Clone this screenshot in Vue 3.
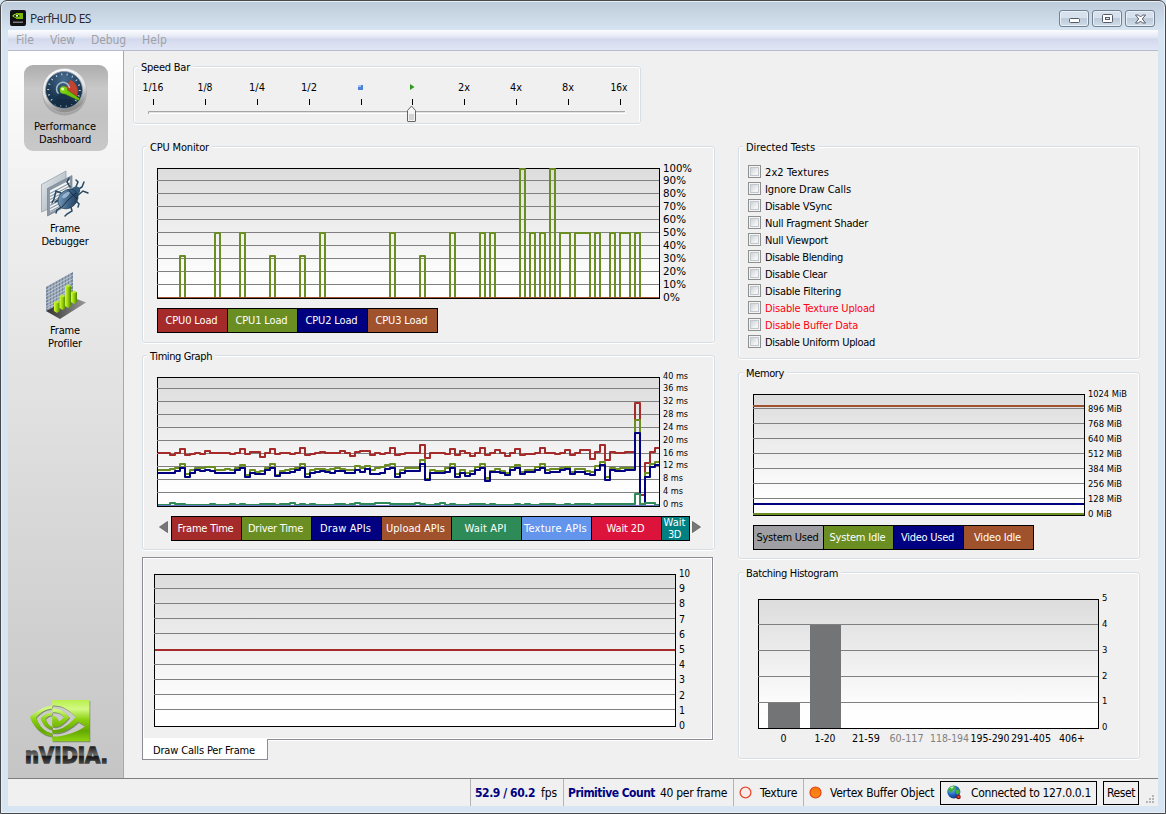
<script setup>
import { h } from 'vue'

// Spreads a label's letters so that it takes exactly the given width in pixels.
const vFit = {
  mounted(el, binding) {
    const n = el.textContent.length
    const w = el.getBoundingClientRect().width
    if (n > 0) el.style.letterSpacing = `${(binding.value - w) / n}px`
  },
}

const menus = [
  { t: 'File', w: 18 },
  { t: 'View', w: 25 },
  { t: 'Debug', w: 35 },
  { t: 'Help', w: 25 },
]

const speeds = [
  { t: '1/16', x: 153, w: 21 },
  { t: '1/8', x: 205, w: 15 },
  { t: '1/4', x: 257, w: 16 },
  { t: '1/2', x: 309, w: 16 },
  { t: '', x: 361 },
  { t: '', x: 412 },
  { t: '2x', x: 464, w: 12 },
  { t: '4x', x: 516, w: 12 },
  { t: '8x', x: 568, w: 12 },
  { t: '16x', x: 619, w: 17 },
]

const tests = [
  { t: '2x2 Textures', w: 64 },
  { t: 'Ignore Draw Calls', w: 86 },
  { t: 'Disable VSync', w: 67 },
  { t: 'Null Fragment Shader', w: 103 },
  { t: 'Null Viewport', w: 63 },
  { t: 'Disable Blending', w: 78 },
  { t: 'Disable Clear', w: 62 },
  { t: 'Disable Filtering', w: 76 },
  { t: 'Disable Texture Upload', w: 110, red: true },
  { t: 'Disable Buffer Data', w: 93, red: true },
  { t: 'Disable Uniform Upload', w: 110 },
]

const cpuKeys = [
  { t: 'CPU0 Load', w: 52, c: 'brown' },
  { t: 'CPU1 Load', w: 52, c: 'olive' },
  { t: 'CPU2 Load', w: 52, c: 'navy' },
  { t: 'CPU3 Load', w: 52, c: 'sienna' },
]
const timingKeys = [
  { t: 'Frame Time', w: 56, c: 'brown' },
  { t: 'Driver Time', w: 55, c: 'olive' },
  { t: 'Draw APIs', w: 51, c: 'navy' },
  { t: 'Upload APIs', w: 59, c: 'sienna' },
  { t: 'Wait API', w: 42, c: 'sea' },
  { t: 'Texture APIs', w: 63, c: 'corn' },
  { t: 'Wait 2D', w: 38, c: 'crimson' },
]
const memoryKeys = [
  { t: 'System Used', w: 62, c: 'grey' },
  { t: 'System Idle', w: 56, c: 'olive' },
  { t: 'Video Used', w: 53, c: 'navy' },
  { t: 'Video Idle', w: 47, c: 'sienna' },
]

// CPU load bursts: [start, end, top]
const bursts = [
  [180, 185, 256], [215, 220, 233], [240, 245, 233], [270, 275, 256], [300, 305, 256],
  [320, 325, 233], [390, 395, 233], [420, 425, 256], [450, 455, 233], [480, 485, 233],
  [490, 495, 233], [520, 525, 169], [530, 535, 233], [540, 545, 233], [550, 555, 169],
  [560, 570, 233], [575, 590, 233], [595, 600, 233], [610, 615, 233], [620, 630, 233],
  [635, 640, 233],
]
const cpuPath = bursts.map(([a, b, y]) => `M${a} 297V${y}H${b}V297`).join('')

// Timing samples as "column:level" pairs in thirds of a pixel.
function steps(src) {
  const pts = src.split(' ').map((p) => p.split(':').map(Number))
  let d = ''
  pts.forEach(([x, y], i) => {
    const px = 140 + x / 3
    const py = 350 + y / 3
    d += i === 0 ? `M158 ${py}` : `H${px}V${py}`
  })
  return d + 'H659'
}
const redLine = steps('52:309 90:315 105:309 120:297 135:315 150:312 165:309 180:312 195:303 210:309 270:312 285:309 300:297 315:312 330:306 360:321 375:309 390:297 405:312 420:309 450:312 465:309 480:294 495:315 510:312 525:309 540:306 555:309 600:303 615:309 630:318 645:306 660:303 690:315 705:309 720:312 735:309 750:294 765:315 780:312 795:309 840:285 855:324 870:309 915:312 930:297 945:315 960:303 975:309 990:318 1005:309 1020:294 1035:315 1050:309 1065:300 1080:309 1095:318 1110:309 1125:297 1140:315 1155:312 1185:309 1200:294 1215:309 1245:312 1260:309 1275:300 1290:315 1305:309 1320:300 1350:327 1365:306 1380:285 1395:330 1410:306 1425:309 1455:306 1485:159 1500:435 1515:339 1530:306 1545:294')
const greenLine = steps('52:360 90:357 105:354 120:342 135:372 150:360 165:354 195:351 225:360 255:357 270:360 285:354 300:345 315:375 330:360 345:366 360:363 375:354 390:342 405:375 420:363 435:360 450:357 465:354 480:342 495:372 510:360 525:357 555:360 570:357 585:354 600:357 615:360 645:348 660:354 675:348 690:360 705:354 720:351 735:345 750:342 765:372 780:360 795:354 840:330 855:387 870:360 885:363 915:354 930:342 945:372 960:360 975:369 990:363 1005:351 1020:342 1035:384 1050:363 1065:357 1080:363 1095:369 1110:351 1125:345 1140:366 1155:360 1185:351 1200:342 1215:360 1230:357 1260:354 1275:351 1290:366 1305:357 1335:363 1350:366 1365:348 1380:336 1395:381 1410:354 1425:357 1440:354 1485:210 1500:462 1515:369 1530:342 1545:336')
const blueLine = steps('52:369 105:363 120:354 135:381 150:369 165:360 180:363 195:360 210:363 225:369 285:360 300:354 315:381 330:369 345:372 375:360 390:354 405:378 420:369 450:366 465:360 480:354 495:381 510:369 525:366 540:363 555:366 570:369 585:363 615:369 645:360 660:366 675:357 690:372 720:369 735:357 750:354 765:381 780:369 795:363 840:342 855:390 870:369 915:366 930:354 945:381 960:369 975:378 990:372 1005:360 1020:354 1035:393 1050:366 1080:369 1095:375 1110:360 1125:354 1140:372 1155:366 1185:360 1200:354 1215:369 1230:366 1260:360 1275:357 1290:372 1305:366 1335:372 1350:375 1365:360 1380:345 1395:390 1410:360 1425:363 1455:360 1485:249 1500:465 1515:381 1530:351 1545:345')
const tealLine = steps('52:465 90:459 105:462 135:465 210:462 225:465 270:462 285:465 300:462 315:465 360:462 405:465 420:462 450:459 465:465 480:462 495:465 510:462 525:465 585:462 615:465 630:462 645:459 660:462 705:459 750:462 825:459 840:462 855:465 885:462 900:459 915:465 930:462 945:465 990:462 1035:465 1050:462 1065:465 1125:462 1140:465 1155:462 1170:465 1200:462 1245:465 1275:462 1290:465 1305:462 1350:465 1365:462 1485:432 1500:465 1515:459 1545:465')

const FONT = "'DejaVu Sans Condensed', 'DejaVu Sans', 'Liberation Sans', sans-serif"
function label(t, x, y, w, size, fill = '#000', anchor = 'start') {
  return h('text', {
    x, y, fill, 'text-anchor': anchor, 'font-size': size, 'font-family': FONT,
    'font-stretch': 'condensed', textLength: w, lengthAdjust: 'spacingAndGlyphs',
  }, t)
}

// A plot frame with a shaded background, rules and a value axis on its right.
function Chart(props, { slots }) {
  const { id, view, box, grid, ticks, bins = [], size = 11 } = props
  const [x0, y0, x1, y1] = box
  return h('svg', { viewBox: view.join(' '), width: view[2], height: view[3], class: 'chart' }, [
    h('defs', [
      h('linearGradient', { id, x1: 0, y1: 0, x2: 0, y2: 1 }, [
        h('stop', { offset: 0, 'stop-color': '#dcdcdc' }),
        h('stop', { offset: 0.82, 'stop-color': '#fdfdfd' }),
        h('stop', { offset: 1, 'stop-color': '#fff' }),
      ]),
    ]),
    h('rect', { x: x0 + 0.5, y: y0 + 0.5, width: x1 - x0, height: y1 - y0, fill: `url(#${id})`, stroke: '#000' }),
    ...grid.map((y) => h('rect', { x: x0, y, width: x1 - x0, height: 1, fill: '#808080' })),
    slots.default ? slots.default() : null,
    ...ticks.map(([t, x, y, w]) => label(t, x, y, w, size)),
    ...bins.map(([t, x, y, w, f]) => label(t, x, y, w, 11, f, 'middle')),
  ])
}
Chart.props = ['id', 'view', 'box', 'grid', 'ticks', 'bins', 'size']

const range = (n, f) => Array.from({ length: n }, (_, i) => f(i))
const cpuGrid = range(9, (i) => 180 + 13 * i)
const cpuTicks = range(11, (i) => {
  const v = 100 - i * 10
  return [`${v}%`, 663, i === 0 ? 172 : Math.round(171.3 + i * 12.95), v === 100 ? 29 : v === 0 ? 17 : 23]
})
const timeGrid = range(9, (i) => 388 + 13 * i)
const timeTicks = range(11, (i) => {
  const v = 40 - i * 4
  return [`${v} ms`, 663, i === 0 ? 379 : Math.round(378.3 + i * 12.87), v >= 10 ? 25 : 20]
})
const memGrid = range(7, (i) => 408 + 15 * i)
const memTicks = range(9, (i) => {
  const v = 1024 - i * 128
  return [`${v} MiB`, 1088, Math.round(396.6 + i * 15.05), v > 999 ? 39 : v === 0 ? 24 : 34]
})
const histTicks = range(6, (i) => [`${5 - i}`, 1102, Math.round(601.4 + i * 25.7), 5.4])
const histBins = [
  ['0', 783.5, 742, 6], ['1-20', 825, 742, 21], ['21-59', 866, 742, 28],
  ['60-117', 906.5, 742, 34, '#808080'], ['118-194', 949.5, 742, 39, '#808080'],
  ['195-290', 990, 742, 39], ['291-405', 1031, 742, 40], ['406+', 1072, 742, 26],
]
const drawGrid = [588, 603, 618, 633, 664, 679, 694, 709]
const drawTicks = range(11, (i) => [`${10 - i}`, 679, Math.round(577 + i * 15.2), i === 0 ? 11 : 6])
const profBars = [
  [54, 302, 311], [59.5, 296, 308], [65, 286, 306], [71, 292, 302],
]
</script>

<template>
  <div class="window">
    <header class="titlebar">
      <svg class="appicon" width="16" height="16" viewBox="0 0 16 16">
        <rect width="16" height="16" rx="2" fill="#111" />
        <rect x="6" y="3" width="7" height="6" fill="#76b900" />
        <path d="M2 6Q6 1.500 11 5.500Q7 10 2 6Z" fill="#8fce1c" />
        <path d="M4 6Q7 3.500 9.500 6Q7 8 4 6" fill="none" stroke="#163800" />
        <circle cx="7" cy="5.800" r="1" fill="#fff" />
        <rect x="3" y="11.500" width="10" height="1.500" fill="#a5a5a5" opacity=".7" />
      </svg>
      <span v-fit="61" class="title">PerfHUD ES</span>
      <div class="winbtns">
        <span class="winbtn"><svg width="13" height="10" viewBox="0 0 13 10"><rect x="1.500" y="4.500" width="10" height="4" rx="1" fill="#fff" stroke="#555b66" /></svg></span>
        <span class="winbtn"><svg width="13" height="10" viewBox="0 0 13 10"><rect x="1.500" y=".5" width="10" height="8" rx="1" fill="#fff" stroke="#555b66" /><rect x="4.500" y="3.500" width="4" height="2" fill="#dce6f1" stroke="#555b66" /></svg></span>
        <span class="winbtn"><svg width="13" height="10" viewBox="0 0 13 10"><path d="M1.500 1H4.500L6.500 3L8.500 1H11.500L8.300 5L11.500 9H8.500L6.500 7L4.500 9H1.500L4.700 5Z" fill="#fff" stroke="#555b66" /></svg></span>
      </div>
    </header>

    <nav class="menubar">
      <span v-for="m in menus" :key="m.t" class="menu"><span v-fit="m.w">{{ m.t }}</span></span>
    </nav>

    <div class="body">
      <aside class="sidebar">
        <div class="tool selected">
          <svg width="50" height="50" viewBox="39 66 50 50">
            <defs>
              <linearGradient id="rim" x1="0" y1="0" x2="0.300" y2="1"><stop offset="0" stop-color="#fff" /><stop offset=".6" stop-color="#e2e2e2" /><stop offset="1" stop-color="#8e8e8e" /></linearGradient>
              <radialGradient id="dial" cx=".5" cy=".2" r=".9"><stop offset="0" stop-color="#46698c" /><stop offset=".6" stop-color="#1c3852" /><stop offset="1" stop-color="#0f2436" /></radialGradient>
            </defs>
            <ellipse cx="64.500" cy="94" rx="22" ry="21.500" fill="#777" opacity=".4" />
            <circle cx="64.500" cy="90.500" r="22.200" fill="url(#rim)" stroke="#b5b5b5" stroke-width=".7" />
            <circle cx="64" cy="90" r="18.500" fill="url(#dial)" stroke="#8796a3" stroke-width=".8" />
            <path d="M64 90L70.500 80A12.500 12.500 0 0 1 76 98Z" fill="#c2432f" />
            <circle cx="64" cy="90" r="15.800" fill="none" stroke="#c4d4e1" stroke-width="2" stroke-dasharray="1 4.410" pathLength="97.400" />
            <path d="M53 99A14 14 0 0 0 75 99L64 92Z" fill="#17334d" />
            <path d="M53 103Q64 109 75 103L70 99H58Z" fill="#142d44" />
            <path d="M58.500 93.500A6.500 6.500 0 1 1 69.500 88" fill="none" stroke="#a7bccd" stroke-width="1.500" />
            <path d="M64 87.500L79.500 98.500L78.500 100.500L62.500 93Z" fill="#6ec40c" stroke="#2c6500" stroke-width=".5" />
            <circle cx="63.500" cy="90" r="3.700" fill="#7cd010" /><circle cx="62.600" cy="89" r="1.600" fill="#e4ffac" />
          </svg>
          <span v-fit="62" class="cap">Performance</span>
          <span v-fit="52" class="cap">Dashboard</span>
        </div>

        <div class="tool">
          <svg width="50" height="50" viewBox="39 168 50 50">
            <defs><linearGradient id="bug" x1="0" y1="0" x2="1" y2="1"><stop offset="0" stop-color="#8db1cf" /><stop offset=".5" stop-color="#41678b" /><stop offset="1" stop-color="#142f4b" /></linearGradient>
              <linearGradient id="page" x1="0" y1="0" x2="1" y2="1"><stop offset="0" stop-color="#e6ebef" /><stop offset="1" stop-color="#9eabb6" /></linearGradient></defs>
            <path d="M41.500 184.500L66 171V201L41.500 212Z" fill="url(#page)" stroke="#8c99a4" stroke-width=".7" />
            <path d="M47.500 188.500L72 175.500V203L47.500 216Z" fill="#8c98a4" stroke="#71808e" stroke-width=".7" />
            <path d="M50 190.500L70 180V202L50 212.500Z" fill="#f3f6f8" />
            <path d="M50 193.500L70 183M50 196.500L70 186M50 199.500L70 189M50 202.500L70 192M50 205.500L70 195M50 208.500L70 198M50 211.500L70 201" stroke="#8d9aa6" stroke-width="1.100" />
            <path d="M61 193L56 191L54 199L52 203M60 199L55 202M63 206L57 210L56 213M71 207L72 211L67 214L65 216M75 200L79 204L78 207M77 196L83 191L88 193M75 189L78 182L76 180M70 187L67 182L69 178M77 190L82 187L84 182" fill="none" stroke="#284861" stroke-width="1.500" stroke-linecap="round" />
            <ellipse cx="75.500" cy="191" rx="5" ry="4.300" fill="#355b7c" transform="rotate(-40 75.500 191)" />
            <ellipse cx="68" cy="199" rx="11" ry="8.800" transform="rotate(-42 68 199)" fill="url(#bug)" stroke="#1e3a54" stroke-width=".7" />
            <path d="M76 193Q67 200 62 207M68 189.500L77 199" fill="none" stroke="#14293e" stroke-width=".9" />
            <ellipse cx="66" cy="195" rx="4.500" ry="1.800" transform="rotate(-40 66 195)" fill="#b4cfe5" opacity=".7" />
          </svg>
          <span v-fit="30" class="cap">Frame</span>
          <span v-fit="47" class="cap">Debugger</span>
        </div>

        <div class="tool">
          <svg width="50" height="50" viewBox="39 270 50 50">
            <defs><linearGradient id="bar" x1="0" y1="0" x2="1" y2="0"><stop offset="0" stop-color="#dcfa45" /><stop offset=".45" stop-color="#9bd60a" /><stop offset="1" stop-color="#4e8600" /></linearGradient>
              <linearGradient id="floor" x1="0" y1="0" x2="1" y2="0"><stop offset="0" stop-color="#333" /><stop offset="1" stop-color="#999" /></linearGradient></defs>
            <path d="M46 287L73 272V301L46 311Z" fill="#76869a" />
            <path d="M49 285.300V310M52 283.700V309M55 282V308M58 280.300V307M61 278.700V306M64 277V305M67 275.300V304M70 273.700V303M46 290L73 275M46 293.300L73 278.500M46 296.600L73 282M46 300L73 285.500M46 303.300L73 289M46 306.600L73 292.500M46 309L73 296" stroke="#d5dde6" stroke-width=".7" />
            <path d="M46 311L73 297.500L86 302.500L60 319Z" fill="url(#floor)" />
            <g v-for="b in profBars" :key="b[0]">
              <path :d="`M${b[0]} ${b[1]}V${b[2]}L${b[0] + 3} ${b[2] + 2}L${b[0] + 6} ${b[2]}V${b[1]}Z`" fill="url(#bar)" />
              <path :d="`M${b[0]} ${b[1]}L${b[0] + 3} ${b[1] - 1.5}L${b[0] + 6} ${b[1]}L${b[0] + 3} ${b[1] + 1.5}Z`" fill="#b8e83a" />
            </g>
          </svg>
          <span v-fit="30" class="cap">Frame</span>
          <span v-fit="34" class="cap">Profiler</span>
        </div>

        <svg class="brand" width="92" height="76" viewBox="20 695 92 76">
          <defs>
            <linearGradient id="nv" x1="0" y1="0" x2="0" y2="1"><stop offset="0" stop-color="#b9ef4c" /><stop offset=".22" stop-color="#d3fa85" /><stop offset=".48" stop-color="#8bd00e" /><stop offset=".75" stop-color="#64a800" /><stop offset="1" stop-color="#8ed411" /></linearGradient>
            <linearGradient id="nvt" x1="0" y1="747" x2="0" y2="763" gradientUnits="userSpaceOnUse"><stop offset="0" stop-color="#222" /><stop offset=".5" stop-color="#6d6d6d" /><stop offset=".6" stop-color="#161616" /><stop offset="1" stop-color="#444" /></linearGradient>
          </defs>
          <g transform="translate(30 689.400) scale(2.480 2.600)">
            <path transform="translate(.3 .4)" fill="#3d5a17" opacity=".55" d="M8.948 8.798v-1.430a6.700 6.700 0 0 1 .424-.018c3.922-.124 6.493 3.374 6.493 3.374s-2.774 3.851-5.750 3.851c-.398 0-.787-.062-1.158-.185v-4.346c1.528.185 1.837.857 2.747 2.385l2.040-1.714s-1.492-1.952-4-1.952a6.016 6.016 0 0 0-.796.035m0-4.735v2.138l.424-.027c5.450-.185 9.010 4.470 9.010 4.470s-4.080 4.964-8.330 4.964c-.370 0-.733-.035-1.095-.097v1.325c.3.035.610.062.910.062 3.957 0 6.820-2.023 9.593-4.408.459.371 2.340 1.263 2.730 1.652-2.633 2.208-8.772 3.984-12.253 3.984-.335 0-.653-.018-.971-.053v1.864H24V4.063zm0 10.326v1.131c-3.657-.654-4.673-4.460-4.673-4.460s1.758-1.944 4.673-2.262v1.237H8.940c-1.528-.186-2.730 1.245-2.730 1.245s.680 2.412 2.739 3.110M2.456 10.900s2.164-3.197 6.500-3.533V6.201C4.153 6.590 0 10.653 0 10.653s2.350 6.802 8.948 7.420v-1.237c-4.840-.6-6.492-5.936-6.492-5.936z" />
            <path fill="url(#nv)" d="M8.948 8.798v-1.430a6.700 6.700 0 0 1 .424-.018c3.922-.124 6.493 3.374 6.493 3.374s-2.774 3.851-5.750 3.851c-.398 0-.787-.062-1.158-.185v-4.346c1.528.185 1.837.857 2.747 2.385l2.040-1.714s-1.492-1.952-4-1.952a6.016 6.016 0 0 0-.796.035m0-4.735v2.138l.424-.027c5.450-.185 9.010 4.470 9.010 4.470s-4.080 4.964-8.330 4.964c-.370 0-.733-.035-1.095-.097v1.325c.3.035.610.062.910.062 3.957 0 6.820-2.023 9.593-4.408.459.371 2.340 1.263 2.730 1.652-2.633 2.208-8.772 3.984-12.253 3.984-.335 0-.653-.018-.971-.053v1.864H24V4.063zm0 10.326v1.131c-3.657-.654-4.673-4.460-4.673-4.460s1.758-1.944 4.673-2.262v1.237H8.940c-1.528-.186-2.730 1.245-2.730 1.245s.680 2.412 2.739 3.110M2.456 10.900s2.164-3.197 6.500-3.533V6.201C4.153 6.590 0 10.653 0 10.653s2.350 6.802 8.948 7.420v-1.237c-4.840-.6-6.492-5.936-6.492-5.936z" />
          </g>
          <text class="brandtext" x="25" y="762.500" textLength="83" lengthAdjust="spacingAndGlyphs" fill="url(#nvt)" stroke="url(#nvt)">nVIDIA.</text>
        </svg>
      </aside>

      <main class="main">
        <section class="group speed">
          <h2 class="legend"><span v-fit="49">Speed Bar</span></h2>
          <svg width="490" height="48" viewBox="142 75 490 48">
            <text v-for="s in speeds.filter((v) => v.t)" :key="s.t" class="small" :x="s.x" y="91" text-anchor="middle" :textLength="s.w" lengthAdjust="spacingAndGlyphs">{{ s.t }}</text>
            <rect v-for="s in speeds" :key="s.x" :x="s.x === 619 ? 620 : s.x" y="99" width="1" height="6" />
            <rect x="358" y="85" width="5" height="5" fill="#4e80d8" /><rect x="358" y="85" width="3" height="2" fill="#a5c4f5" />
            <path d="M410 84L414.500 87L410 90Z" fill="#2d9a1c" />
            <path d="M148.500 114V111.500H625.500" fill="none" stroke="#a5a5a5" />
            <path d="M149 113.500H625.500V111" fill="none" stroke="#fff" />
            <path d="M149 112.500H625" stroke="#e3e3e3" />
            <path d="M407.500 110.500L411.500 106L415.500 110.500V121Q415.500 121.500 415 121.500H408Q407.500 121.500 407.500 121Z" fill="#f4f4f4" stroke="#646464" />
            <rect x="409" y="114" width="5" height="6" fill="#d3d3d3" />
          </svg>
        </section>

        <div class="columns">
          <div class="left">
            <section class="group cpu">
              <h2 class="legend"><span v-fit="59">CPU Monitor</span></h2>
              <Chart id="g1" :view="[157, 160, 545, 142]" :box="[157, 168, 659, 298]" :grid="cpuGrid" :ticks="cpuTicks">
                <path d="M158 297.500H659" stroke="#a0522d" />
                <path :d="cpuPath" fill="none" stroke="#6b8e23" stroke-width="2" stroke-linejoin="round" />
              </Chart>
              <div class="keys">
                <span v-for="k in cpuKeys" :key="k.t" class="key" :class="k.c"><span v-fit="k.w">{{ k.t }}</span></span>
              </div>
            </section>

            <section class="group timing">
              <h2 class="legend"><span v-fit="62">Timing Graph</span></h2>
              <Chart id="g2" :view="[157, 368, 545, 143]" :box="[157, 377, 659, 506]" :grid="timeGrid" :ticks="timeTicks" :size="9.5">
                <g fill="none" stroke-width="2" stroke-linejoin="round">
                  <path :d="redLine" stroke="#a52a2a" />
                  <path :d="greenLine" stroke="#6b8e23" />
                  <path :d="blueLine" stroke="#000080" />
                  <path :d="tealLine" stroke="#2e8b57" />
                </g>
                <path d="M158 505.500H659" stroke="#6a78c4" />
              </Chart>
              <div class="keyrow">
                <svg width="9" height="12" viewBox="0 0 9 12"><path d="M8.500 .5V11.500L.5 6Z" fill="#777" stroke="#555" stroke-width=".7" /></svg>
                <div class="keys">
                  <span v-for="k in timingKeys" :key="k.t" class="key" :class="k.c"><span v-fit="k.w">{{ k.t }}</span></span>
                  <span class="key teal narrow"><span v-fit="22">Wait</span><span v-fit="13">3D</span></span>
                </div>
                <svg width="9" height="12" viewBox="0 0 9 12"><path d="M.5 .5V11.500L8.500 6Z" fill="#777" stroke="#555" stroke-width=".7" /></svg>
              </div>
            </section>

            <section class="pane">
              <Chart id="g3" :view="[154, 566, 545, 166]" :box="[154, 574, 675, 726]" :grid="drawGrid" :ticks="drawTicks">
                <rect x="155" y="649" width="520" height="2" fill="#a52a2a" />
              </Chart>
            </section>
            <div class="tab"><span v-fit="102">Draw Calls Per Frame</span></div>
          </div>

          <div class="right">
            <section class="group tests">
              <h2 class="legend"><span v-fit="69">Directed Tests</span></h2>
              <div v-for="t in tests" :key="t.t" class="check" :class="{ red: t.red }">
                <i class="box"></i><span v-fit="t.w">{{ t.t }}</span>
              </div>
            </section>

            <section class="group memory">
              <h2 class="legend"><span v-fit="38">Memory</span></h2>
              <Chart id="g4" :view="[753, 386, 380, 134]" :box="[753, 394, 1084, 515]" :grid="memGrid" :ticks="memTicks" :size="9.5">
                <rect x="753" y="405" width="331" height="2" fill="#a0522d" />
                <rect x="753" y="503" width="331" height="2" fill="#000080" />
                <rect x="753" y="513" width="331" height="2" fill="#6b8e23" />
              </Chart>
              <div class="keys">
                <span v-for="k in memoryKeys" :key="k.t" class="key" :class="k.c"><span v-fit="k.w">{{ k.t }}</span></span>
              </div>
            </section>

            <section class="group hist">
              <h2 class="legend"><span v-fit="92">Batching Histogram</span></h2>
              <Chart id="g5" :view="[753, 590, 380, 160]" :box="[758, 599, 1098, 728]" :grid="[624, 650, 676, 702]" :ticks="histTicks" :bins="histBins" :size="9.5">
                <rect x="768" y="703" width="32" height="25" fill="#737476" />
                <rect x="810" y="625" width="31" height="103" fill="#737476" />
              </Chart>
            </section>
          </div>
        </div>
      </main>
    </div>

    <footer class="status">
      <div class="cell fps"><b v-fit="60">52.9 / 60.2</b><span v-fit="16">fps</span></div>
      <div class="cell prim"><b v-fit="87">Primitive Count</b><span v-fit="67">40 per frame</span></div>
      <div class="cell tex">
        <svg width="13" height="13" viewBox="0 0 13 13"><circle cx="6.500" cy="6.500" r="5.400" fill="#f7ecea" stroke="#e8492f" stroke-width="1.300" /></svg>
        <span v-fit="37">Texture</span>
      </div>
      <div class="cell vbo">
        <svg width="13" height="13" viewBox="0 0 13 13"><defs><linearGradient id="or" x1="0" y1="0" x2="0" y2="1"><stop offset="0" stop-color="#f5760e" /><stop offset="1" stop-color="#fb8a1b" /></linearGradient></defs><circle cx="6.500" cy="6.500" r="5.500" fill="url(#or)" stroke="#e8420e" stroke-width="1.200" /></svg>
        <span v-fit="104">Vertex Buffer Object</span>
      </div>
      <div class="boxed conn">
        <svg width="15" height="16" viewBox="0 0 15 16">
          <defs><radialGradient id="sea" cx=".35" cy=".3" r=".8"><stop offset="0" stop-color="#7ec8ff" /><stop offset=".5" stop-color="#2468c8" /><stop offset="1" stop-color="#0a2870" /></radialGradient></defs>
          <circle cx="6.800" cy="7" r="6.500" fill="url(#sea)" />
          <path d="M1 4Q4 0 8 1L9 4L6 5L5 8L2 7ZM9 5L12.500 4L13 8L10.500 10L9 8Z" fill="#3fae3c" />
          <path d="M3 2.500Q5 1 7 1.500L5 4Z" fill="#d4f7c4" />
          <circle cx="11.500" cy="12" r="2.300" fill="#7d1710" /><circle cx="11.500" cy="11.800" r="1.100" fill="#f0503c" />
        </svg>
        <span v-fit="120">Connected to 127.0.0.1</span>
      </div>
      <div class="boxed reset"><span v-fit="28">Reset</span></div>
      <svg class="grip" width="10" height="10" viewBox="0 0 10 10"><g fill="#b5b5b5"><rect x="6" y="0" width="2" height="2" /><rect x="6" y="3" width="2" height="2" /><rect x="6" y="6" width="2" height="2" /><rect x="3" y="3" width="2" height="2" /><rect x="3" y="6" width="2" height="2" /><rect x="0" y="6" width="2" height="2" /></g></svg>
    </footer>
  </div>
</template>

<style>
body { background: #d7e4f2; overflow: hidden; }
.chart { display: block; overflow: visible; }
</style>

<style scoped>
.window, .window * { box-sizing: border-box; }
.window {
  width: 1166px; height: 814px; padding: 0 7px 7px;
  border: 1px solid #48484a; border-radius: 7px 7px 0 0;
  background: linear-gradient(#bccad9 0, #d7e4f2 30px);
  box-shadow: inset 0 0 0 1px #e6eef7;
  font-family: 'DejaVu Sans Condensed', 'DejaVu Sans', 'Liberation Sans', sans-serif;
  font-stretch: condensed; font-size: 11px; line-height: 13px; color: #000;
  white-space: nowrap; overflow: hidden;
}
svg { display: block; flex: none; }
.titlebar { height: 29px; display: flex; align-items: flex-start; padding: 9px 3px 0 2px; }
.title { margin: 1px 0 0 4px; font: 12px/16px 'Open Sans', 'Noto Sans', sans-serif; color: #26262e; }
.winbtns { margin-left: auto; display: flex; gap: 3px; }
.winbtn {
  width: 30px; height: 17px; border: 1px solid #73808f; border-radius: 3px;
  background: linear-gradient(#d6e1ed 0 45%, #bccad9 50%, #cfdcea);
  box-shadow: inset 0 0 0 1px #e8f0f8;
  display: flex; align-items: center; justify-content: center;
}
.menubar {
  height: 21px; display: flex; gap: 16px; padding: 4px 8px 0; color: #a0a0a6; font-size: 12px;
  background: linear-gradient(#fbfcfe 0, #e4e8f4 35%, #d3d9ed 45%, #e1e6f5); border-bottom: 1px solid #b6bccc;
}
.body { display: flex; height: 728px; background: #f0f0f0; border-bottom: 1px solid #7f7f7f; }
.sidebar {
  width: 116px; padding: 14px 0 7px; border-right: 1px solid #a8a8a8;
  background: linear-gradient(#fff, #f0f0f0 20%, #c5c5c5);
  display: flex; flex-direction: column; align-items: center; gap: 16px;
}
.tool { width: 84px; height: 86px; padding-top: 1px; border-radius: 9px; display: flex; flex-direction: column; align-items: center; margin-left: 1px; }
.tool svg { margin: 0 4px 4px 0; }
.cap { margin-right: 2px; }
.tool.selected { background: linear-gradient(#adadad, #c9c9c9 28%, #c2c2c2 60%, #c9c9c9); }
.brand { margin-top: auto; overflow: visible; }
.brandtext { font: bold 20.5px 'DejaVu Sans', sans-serif; stroke-width: 1.3px; }

.main { padding: 15px 0 0 9px; }
.group {
  position: relative; border: 1px solid #d5dfe5; border-radius: 3px;
  box-shadow: inset 1px 1px 0 #fff, inset -1px 0 0 #fff, 0 1px 0 #fff;
}
.legend { position: absolute; top: -6px; left: 4px; margin: 0; padding: 0 3px; background: #f0f0f0; font-size: 11px; font-weight: normal; }
.speed { width: 508px; height: 58px; padding: 8px 0 0 8px; }
.small { font-size: 11px; }
.columns { display: flex; gap: 23px; margin: 22px 0 0 9px; }
.left { width: 573px; }
.cpu { height: 197px; padding: 13px 0 0 14px; }
.keys { display: flex; }
.cpu .keys { margin-top: 6px; }
.key {
  width: 71px; height: 25px; margin-right: -1px; padding: 0 2px 1px 0; border: 1px solid #000; color: #fff;
  display: flex; align-items: center; justify-content: center;
}
.narrow { width: 29px; flex-direction: column; line-height: 12px; padding-bottom: 0; }
.brown { background: #a52a2a; }
.olive { background: #6b8e23; }
.navy { background: #000080; }
.sienna { background: #a0522d; }
.sea { background: #2e8b57; }
.corn { background: #6495ed; }
.crimson { background: #dc143c; }
.teal { background: #008080; }
.grey { background: #a0a0a4; color: #000; }
.timing { height: 195px; margin-top: 12px; padding: 12px 0 0 14px; }
.keyrow { display: flex; align-items: flex-start; gap: 3px; margin: 5px 0 0 2px; }
.keyrow > svg { margin-top: 5px; }
.pane { width: 571px; height: 183px; margin-top: 7px; padding: 8px 0 0 11px; border: 1px solid #8c8c96; box-shadow: inset 0 0 0 1px #fff, 1px 1px 0 #fff; }
.tab { position: relative; width: 126px; height: 21px; margin-top: -1px; background: #fff; border: 1px solid #8c8c96; border-top: 0; padding: 5px 0 0 10px; }

.right { width: 402px; }
.tests { height: 213px; padding: 16px 0 0 9px; }
.check { display: flex; align-items: center; gap: 4px; height: 17px; padding-top: 1px; }
.check.red { color: #ff0010; }
.box {
  width: 13px; height: 13px; border: 1px solid #8e8f8f; margin-bottom: 2px;
  background: linear-gradient(135deg, #ced3d9, #f4f4f4 75%) center / 7px 7px no-repeat, #f4f4f4;
  box-shadow: inset 0 0 0 1px #f4f4f4, inset 0 0 0 2px #c2c7cc;
}
.memory { height: 187px; margin-top: 13px; padding: 13px 0 0 14px; }
.memory .keys { margin-top: 5px; }
.hist { height: 187px; margin-top: 13px; padding: 17px 0 0 14px; }

.status { height: 27px; display: flex; justify-content: flex-end; background: #f0f0f0; font-size: 12px; line-height: 15px; position: relative; }
.cell { height: 27px; border-left: 1px solid #b4b4b4; display: flex; align-items: center; gap: 5px; padding-left: 4px; }
.cell span, .cell b { padding-top: 2px; }
.cell b { color: #000080; }
.fps { width: 93px; gap: 6px; }
.prim { width: 170px; }
.tex { width: 70px; padding-left: 5px; gap: 8px; }
.vbo { width: 137px; padding-left: 5px; gap: 8px; }
.boxed { height: 24px; margin-top: 2px; border: 1px solid #000; display: flex; align-items: center; }
.conn { width: 157px; padding-left: 6px; gap: 9px; }
.reset { width: 36px; margin: 2px 19px 0 6px; padding-left: 3px; }
.grip { position: absolute; right: 2px; bottom: 1px; }
</style>
